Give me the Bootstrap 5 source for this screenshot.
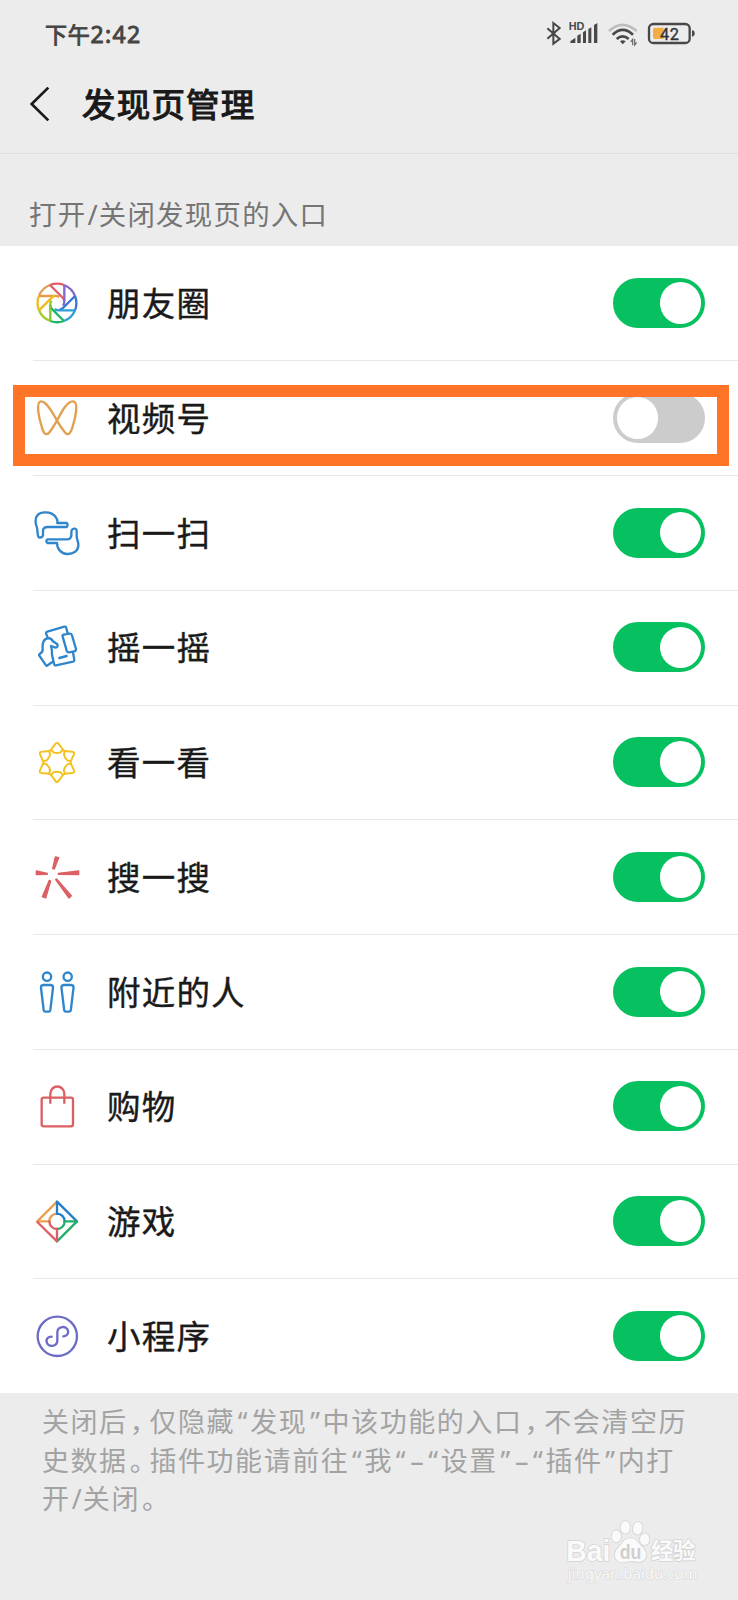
<!DOCTYPE html>
<html lang="zh-CN">
<head>
<meta charset="utf-8">
<meta name="viewport" content="width=device-width, initial-scale=1">
<title>发现页管理</title>
<link href="https://cdn.jsdelivr.net/npm/bootstrap@5.3.0/dist/css/bootstrap.min.css" rel="stylesheet">
<style>
  body { background:#ececec; color:#1a1a1a; font-family:"Noto Sans CJK SC",sans-serif; min-height:1600px; overflow-x:hidden; }
  .status-bar { height:60px; padding:20px 41px 0 45px; }
  .clock { font-size:22px; line-height:28px; font-weight:400; color:#444; letter-spacing:.8px; -webkit-text-stroke:.9px #444; margin-top:-1.5px; }
  .clock b { font-family:"Noto Sans",sans-serif; font-weight:400; font-size:23px; letter-spacing:1.3px; }
  .title-bar { height:94px; padding:0 0 2px 30px; border-bottom:1px solid #e0e0e0; }
  .title-bar h1 { font-size:33.5px; line-height:48px; letter-spacing:1.2px; font-weight:400; margin:-5px 0 0 32px; -webkit-text-stroke:1.2px #1a1a1a; }
  .caption-text { height:91.8px; padding:35.5px 0 0 29px; font-size:27.4px; line-height:46px; letter-spacing:1.3px; color:#757575; white-space:nowrap; }
  .entry { height:114.75px; padding:0 33px 0 33px; position:relative; }
  .entry + .entry::before { content:""; position:absolute; left:33px; right:0; top:-.3px; height:1px; background:#e8e8e8; }
  .entry svg { width:48px; height:48px; flex:none; fill:none; stroke-width:7; stroke-linejoin:round; stroke-linecap:round; }
  .entry-name { font-size:33.5px; line-height:48px; letter-spacing:1.2px; margin:-2px 0 0 26px; -webkit-text-stroke:.4px #1a1a1a; }
  .form-switch .form-check-input.toggle { width:92.5px; height:50px; margin:0; border:4px solid #07c160; border-radius:25px; background:#07c160; position:relative; box-shadow:none; }
  .toggle::after { content:""; position:absolute; width:41.5px; height:41.5px; border-radius:50%; background:#fff; top:.2px; right:0; }
  .form-switch .form-check-input.toggle:not(:checked) { background:#ccc; border-color:#ccc; }
  .toggle:not(:checked)::after { right:auto; left:0; }
  .highlight { position:absolute; left:13.3px; top:24.6px; width:715.4px; height:81px; border:12px solid #ff7528; z-index:2; pointer-events:none; }
  .hint { padding:9px 0 0 42px; font-size:27px; line-height:38.5px; letter-spacing:1.55px; color:#a3a3a3; white-space:nowrap; }
  .pn { display:inline-block; width:21.8px; font-feature-settings:"halt"; letter-spacing:0; padding-left:2px; }
  .qt, .ds, .sl { display:inline-block; font-family:"Noto Sans",sans-serif; letter-spacing:0; line-height:1; }
  .qt { width:15.2px; text-align:center; }
  .ds { width:17.3px; text-align:center; }
  .sl { width:12.3px; text-align:center; }
  .brand { position:absolute; left:564px; top:1516px; }
</style>
</head>
<body class="position-relative">
<header>
  <div class="status-bar d-flex justify-content-between align-items-start">
    <div class="clock">下午<b>2:42</b></div>
    <svg width="152" height="28" viewBox="135 60 456 84" fill="none" stroke="#484848">
      <path d="M142 85 L179 117 L160 131 V69 L179 84 L142 116" stroke-width="6"/>
      <text x="206" y="89" font-family="Liberation Sans" font-weight="700" font-size="30" fill="#484848" stroke="none" textLength="47" lengthAdjust="spacingAndGlyphs">HD</text>
      <path d="M211 129V124L226 113V129ZM232 129V107L242 101V129ZM249 129V97L258 91V129ZM265 129V87L274 82V129ZM282 129V75L292 69V129Z" fill="#484848" stroke="none"/>
      <path d="M327 93Q368 56 410 93" stroke="#bdbdbd" stroke-width="8"/>
      <path d="M338 104Q368 75 399 104M350 117Q368 101 386 117" stroke-width="8"/>
      <path d="M360 124Q368 117 377 124L368 133Z" fill="#484848" stroke="none"/>
      <path d="M398 136V118L392 126M404 117V135L410 127" stroke-width="3.500" stroke="#666"/>
      <rect x="447" y="72" width="122" height="57" rx="13" stroke-width="7"/>
      <path d="M464 83H491V117H464Q459 117 459 111V89Q459 83 464 83Z" fill="#f3ae43" stroke="none"/>
      <path d="M576 91Q584 91 584 100Q584 110 576 110Z" fill="#484848" stroke="none"/>
      <text x="480" y="119" font-family="Roboto" font-size="49" fill="#333" stroke="#333" stroke-width="1" textLength="57">42</text>
    </svg>
  </div>
  <div class="title-bar d-flex align-items-center">
    <svg class="mb-1" width="20" height="36" viewBox="90 258 60 108" fill="none" stroke="#1a1a1a" stroke-width="8"><path d="M145 263L95 312L145 361"/></svg>
    <h1>发现页管理</h1>
  </div>
  <div class="caption-text">打开<span class="sl">/</span>关闭发现页的入口</div>
</header>
<main class="bg-white">
  <div class="entry d-flex align-items-center">
    <svg viewBox="99 86 144 144">
      <g stroke-linecap="butt">
      <path d="M117 136A58 58 0 0 1 150 104" stroke="#e39a55"/><path d="M150 104A58 58 0 0 1 192 104" stroke="#df5e66"/>
      <path d="M192 104A58 58 0 0 1 225 137" stroke="#8667ca"/><path d="M225 137A58 58 0 0 1 225 180" stroke="#3b75d4"/>
      <path d="M225 180A58 58 0 0 1 192 212" stroke="#2e9ed7"/><path d="M192 212A58 58 0 0 1 151 212" stroke="#21b568"/>
      <path d="M151 212A58 58 0 0 1 117 180" stroke="#9dcc22"/><path d="M117 180A58 58 0 0 1 117 136" stroke="#edbd20"/>
      <path d="M117 137H163Q171 136 178 140" stroke="#e59a50"/><path d="M150 104L186 140Q192 146 193 152" stroke="#df5e66"/><path d="M193 104V149Q194 159 189 166" stroke="#8667ca"/><path d="M225 137L189 173Q184 178 177 179" stroke="#3b75d4"/><path d="M225 180H180Q171 181 164 176" stroke="#2e9ed7"/>
      <path d="M192 212L157 177Q151 171 150 164" stroke="#21b568"/><path d="M151 212V170Q149 159 154 151" stroke="#81c82b"/><path d="M117 180L153 144Q158 138 165 137" stroke="#edbd20"/>
      </g>
    </svg>
    <div class="entry-name">朋友圈</div>
    <div class="form-switch ms-auto p-0 m-0"><input class="form-check-input toggle d-block" type="checkbox" role="switch" checked></div>
  </div>
  <div class="entry d-flex align-items-center">
    <svg viewBox="99 431 144 144" stroke="#e0a050"><path d="M171 511C158 487 139 452 123 453C106 455 117 504 126 532C132 554 141 556 149 545C157 535 164 523 171 511C185 484 202 451 220 453C237 455 226 504 217 532C210 554 202 556 194 545C186 535 178 524 171 511Z"/></svg>
    <div class="entry-name">视频号</div>
    <div class="form-switch ms-auto p-0 m-0"><input class="form-check-input toggle d-block" type="checkbox" role="switch"></div>
    <div class="highlight"></div>
  </div>
  <div class="entry d-flex align-items-center">
    <svg viewBox="99 55 144 144" stroke="#2f86cd"><path d="M116 140C111 134 114 119 110 108C104 91 108 78 114 72C123 63 145 64 155 69C167 75 174 88 172 97H200Q206 102 200 109H143Q131 109 129 119V134Q126 142 116 140ZM225 114C216 112 214 119 214 126V136Q211 146 202 146H142Q136 151 142 157H171C171 175 184 189 201 190C219 191 234 182 235 165C236 153 230 147 230 136V121Q230 115 225 114Z"/></svg>
    <div class="entry-name">扫一扫</div>
    <div class="form-switch ms-auto p-0 m-0"><input class="form-check-input toggle d-block" type="checkbox" role="switch" checked></div>
  </div>
  <div class="entry d-flex align-items-center">
    <svg viewBox="99 399 144 144" stroke="#2f86cd"><path d="M143 443L138 430Q138 426 142 425L193 410Q198 409 199 414L203 431M219 487L223 510Q223 514 219 515L168 526Q163 527 162 521L156 494M188 440Q186 436 191 434L208 431Q214 430 216 436L228 477Q228 483 223 484L207 487Q202 488 200 482ZM178 504L200 498M145 444C130 446 126 461 128 478Q129 486 119 492Q116 494 118 497L138 526Q141 529 144 525L157 516M145 444Q154 445 159 454L172 463Q175 472 167 473L153 468Q157 480 156 494"/></svg>
    <div class="entry-name">摇一摇</div>
    <div class="form-switch ms-auto p-0 m-0"><input class="form-check-input toggle d-block" type="checkbox" role="switch" checked></div>
  </div>
  <div class="entry d-flex align-items-center">
    <svg viewBox="99 54 144 144" stroke="#f2c320"><defs><path id="petal" d="M152 90C161 82 165 68 171 68C177 68 181 82 190 90Q185 92 182 97Q171 101 160 97Q157 92 152 90Z"/></defs><g stroke-width="6"><use href="#petal"/><use href="#petal" transform="rotate(60 171 127)"/><use href="#petal" transform="rotate(120 171 127)"/><use href="#petal" transform="rotate(180 171 127)"/><use href="#petal" transform="rotate(240 171 127)"/><use href="#petal" transform="rotate(300 171 127)"/></g></svg>
    <div class="entry-name">看一看</div>
    <div class="form-switch ms-auto p-0 m-0"><input class="form-check-input toggle d-block" type="checkbox" role="switch" checked></div>
  </div>
  <div class="entry d-flex align-items-center">
    <svg viewBox="99 398 144 144"><g fill="#db6063" stroke="#db6063" stroke-width="4"><path d="M166 410L176 412L163 446L158 445ZM109 452L142 459V462L109 463ZM175 459L236 452V463L175 462ZM148 480L152 482L137 533L127 529ZM167 478L170 476L214 526L207 533Z"/></g></svg>
    <div class="entry-name">搜一搜</div>
    <div class="form-switch ms-auto p-0 m-0"><input class="form-check-input toggle d-block" type="checkbox" role="switch" checked></div>
  </div>
  <div class="entry d-flex align-items-center">
    <svg viewBox="99 84 144 144" stroke="#2f86cd"><circle cx="141" cy="110" r="12.5"/><circle cx="203" cy="110" r="12.5"/><path id="person" d="M130 135H152Q160 136 159 144L151 210Q150 215 146 215H136Q132 215 131 210L123 144Q122 136 130 135Z"/><use href="#person" x="61.500"/></svg>
    <div class="entry-name">附近的人</div>
    <div class="form-switch ms-auto p-0 m-0"><input class="form-check-input toggle d-block" type="checkbox" role="switch" checked></div>
  </div>
  <div class="entry d-flex align-items-center">
    <svg viewBox="99 427 144 144" stroke="#db6063"><rect x="125" y="474" width="94" height="86" rx="6"/><path d="M151 492V462A20.500 21 0 0 1 193 462V492" stroke-linecap="butt"/></svg>
    <div class="entry-name">购物</div>
    <div class="form-switch ms-auto p-0 m-0"><input class="form-check-input toggle d-block" type="checkbox" role="switch" checked></div>
  </div>
  <div class="entry d-flex align-items-center">
    <svg viewBox="99 82 144 144"><path d="M148 155H112L171 96" stroke="#e6a04e"/><path d="M148 155A23 23 0 0 1 171 132" stroke="#e6a04e"/><path d="M171 132V96L231 155" stroke="#247ecb"/><path d="M171 132A23 23 0 0 1 194 155" stroke="#247ecb"/><path d="M194 155H231L171 215" stroke="#24ae6d"/><path d="M194 155A23 23 0 0 1 171 178" stroke="#24ae6d"/><path d="M171 178V215L112 157" stroke="#db6063"/><path d="M171 178A23 23 0 0 1 148 155" stroke="#db6063"/></svg>
    <div class="entry-name">游戏</div>
    <div class="form-switch ms-auto p-0 m-0"><input class="form-check-input toggle d-block" type="checkbox" role="switch" checked></div>
  </div>
  <div class="entry d-flex align-items-center">
    <svg viewBox="99 426 144 144" stroke="#6d6cc5"><circle cx="172" cy="499" r="59"/><path d="M155 500C143 500 138 508 140 516C144 532 172 532 172 511V488C172 467 200 466 204 482C206 491 201 498 190 499"/></svg>
    <div class="entry-name">小程序</div>
    <div class="form-switch ms-auto p-0 m-0"><input class="form-check-input toggle d-block" type="checkbox" role="switch" checked></div>
  </div>
</main>
<footer class="hint">
  <div>关闭后<span class="pn">，</span>仅隐藏<span class="qt">“</span>发现<span class="qt">”</span>中该功能的入口<span class="pn">，</span>不会清空历</div>
  <div>史数据<span class="pn">。</span>插件功能请前往<span class="qt">“</span>我<span class="qt">“</span><span class="ds">–</span><span class="qt">“</span>设置<span class="qt">”</span><span class="ds">–</span><span class="qt">“</span>插件<span class="qt">”</span>内打</div>
  <div>开<span class="sl">/</span>关闭<span class="pn">。</span></div>
</footer>
<svg class="brand" width="145" height="72" viewBox="585 408 435 216" fill="#fafafa" stroke="#d4d4d4" stroke-width="5" paint-order="stroke" stroke-linejoin="round">
  <text x="592" y="543" font-family="Liberation Sans" font-weight="700" font-size="88" textLength="132" lengthAdjust="spacingAndGlyphs">Bai</text>
  <ellipse cx="742" cy="469" rx="14" ry="18"/><ellipse cx="769" cy="442" rx="14" ry="19"/><ellipse cx="806" cy="445" rx="14" ry="19" transform="rotate(8 806 445)"/><ellipse cx="827" cy="478" rx="14" ry="18"/>
  <path d="M785 475C768 474 763 487 750 500C736 513 734 528 743 539C756 552 770 544 786 544C803 544 815 551 827 538C836 526 831 511 819 500C806 487 802 476 785 475Z"/>
  <text x="752" y="537" font-family="Liberation Sans" font-weight="700" font-size="58" fill="#cfcfcf" stroke="none" textLength="65" lengthAdjust="spacingAndGlyphs">du</text>
  <text x="846" y="537" font-family="Noto Sans CJK SC" font-weight="700" font-size="68" textLength="134">经验</text>
  <text x="596" y="597" font-family="Noto Sans" font-size="44" stroke-width="3" textLength="390" lengthAdjust="spacingAndGlyphs">jingyan.baidu.com</text>
</svg>
<script src="https://cdn.jsdelivr.net/npm/bootstrap@5.3.0/dist/js/bootstrap.bundle.min.js"></script>
</body>
</html>
